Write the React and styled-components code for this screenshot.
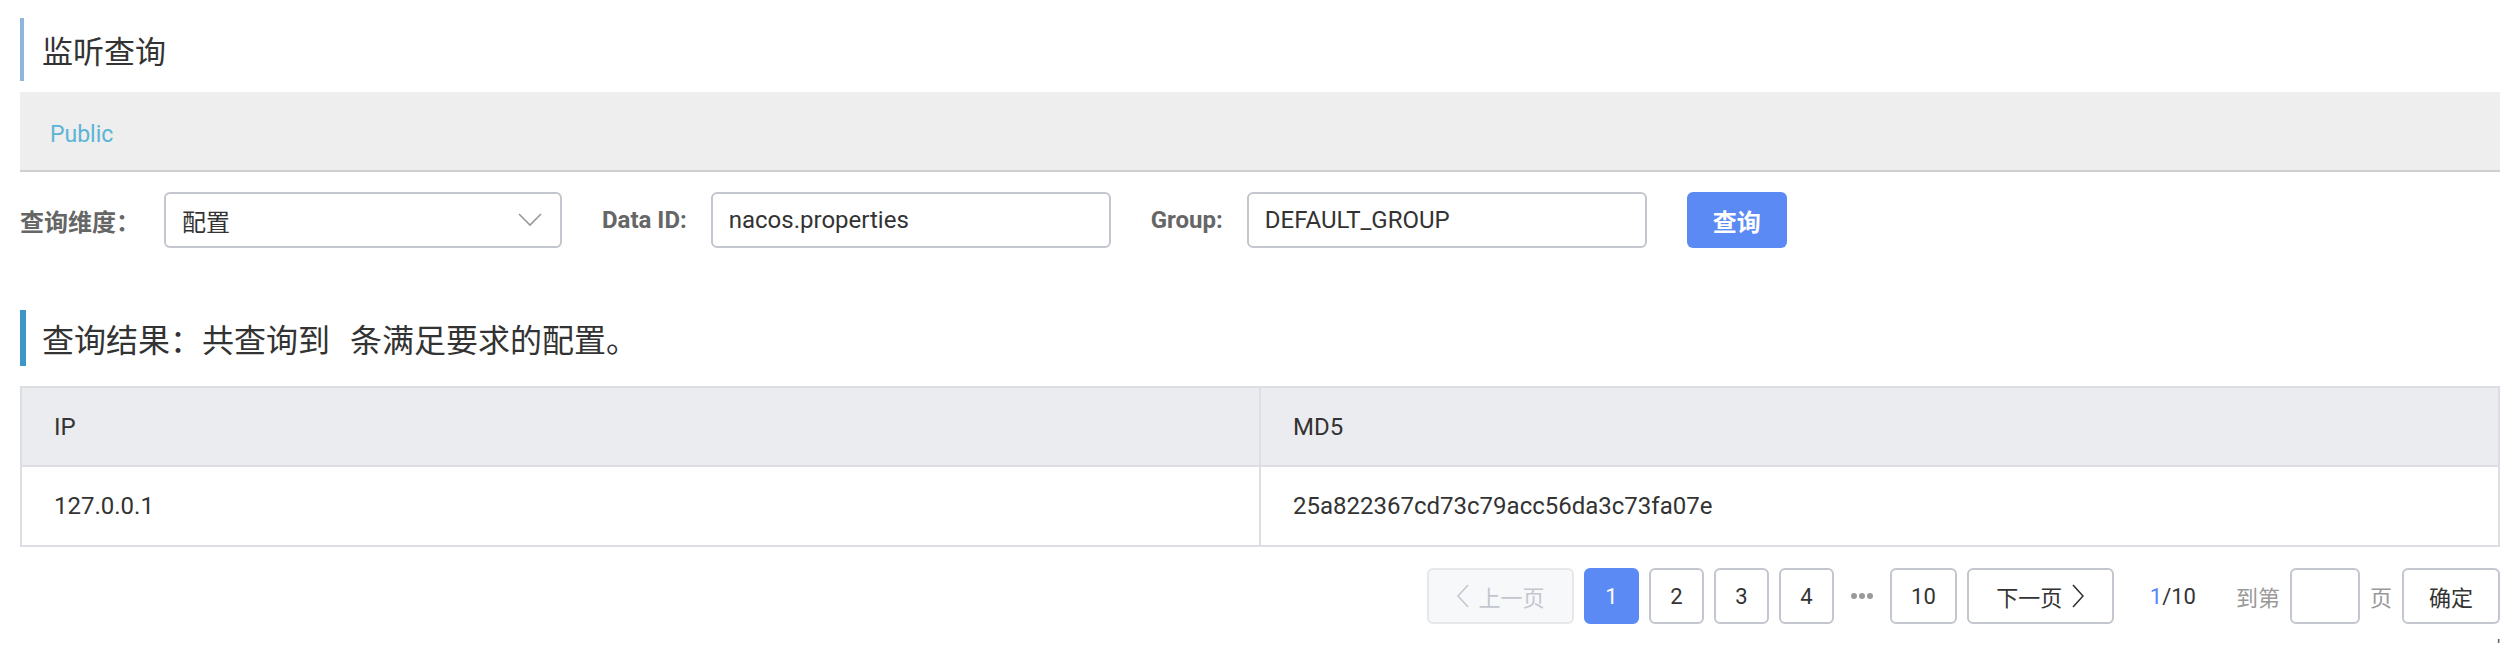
import styled, { createGlobalStyle } from "styled-components";

const GlobalStyle = createGlobalStyle`
  body {
    margin: 0;
    background: #fff;
    font-family: Roboto, "Noto Sans CJK SC", sans-serif;
    color: #333;
  }
  * {
    box-sizing: border-box;
  }
`;

const rows = [{ ip: "127.0.0.1", md5: "25a822367cd73c79acc56da3c73fa07e" }];

const ChevronDown = () => (
  <svg width="24" height="14" viewBox="0 0 24 14">
    <polyline points="1,1 12,12 23,1" fill="none" stroke="#999" strokeWidth="1.6" />
  </svg>
);

const ChevronSide = ({ left }) => (
  <svg width="12" height="24" viewBox="0 0 12 24">
    <polyline
      points={left ? "11,1 1,12 11,23" : "1,1 11,12 1,23"}
      fill="none"
      stroke="currentColor"
      strokeWidth="1.6"
    />
  </svg>
);

const Dots = () => (
  <svg width="24" height="8" viewBox="0 0 24 8">
    <circle cx="4" cy="4" r="3" fill="#999" />
    <circle cx="12" cy="4" r="3" fill="#999" />
    <circle cx="20" cy="4" r="3" fill="#999" />
  </svg>
);

const App = () => {
  const pages = [1, 2, 3, 4];

  return (
    <>
      <GlobalStyle />
      <Page>
        <SectionTitle $color="#8fb5dd" $border={4} $height={63} $size={31}>
          监听查询
        </SectionTitle>
        <NamespaceBar>
          <NamespaceLink>Public</NamespaceLink>
        </NamespaceBar>

        <SearchForm>
          <FormItem>
            <Label>查询维度：</Label>
            <SelectBox>
              <span>配置</span>
              <ChevronDown />
            </SelectBox>
          </FormItem>
          <FormItem>
            <Label>Data ID:</Label>
            <TextInput defaultValue="nacos.properties" />
          </FormItem>
          <FormItem>
            <Label>Group:</Label>
            <TextInput defaultValue="DEFAULT_GROUP" />
          </FormItem>
          <PrimaryButton>查询</PrimaryButton>
        </SearchForm>

        <SectionTitle $color="#3c96c6" $border={6} $height={56} $top={62} $size={32}>
          查询结果：共查询到<Count />条满足要求的配置。
        </SectionTitle>

        <Table>
          <thead>
            <tr>
              <Th>IP</Th>
              <Th>MD5</Th>
            </tr>
          </thead>
          <tbody>
            {rows.map((row) => (
              <tr key={row.ip}>
                <Td>{row.ip}</Td>
                <Td>{row.md5}</Td>
              </tr>
            ))}
          </tbody>
        </Table>

        <Pagination>
          <PageButton disabled $wide>
            <ChevronSide left />
            上一页
          </PageButton>
          {pages.map((p) => (
            <PageButton key={p} $active={p === 1}>
              {p}
            </PageButton>
          ))}
          <Ellipsis>
            <Dots />
          </Ellipsis>
          <PageButton>10</PageButton>
          <PageButton $wide>
            下一页
            <ChevronSide />
          </PageButton>
          <PageInfo>
            <Current>1</Current>/10
          </PageInfo>
          <JumpText $gap={30}>到第</JumpText>
          <JumpInput />
          <JumpText>页</JumpText>
          <PageButton $confirm>确定</PageButton>
        </Pagination>
        <Tick>'</Tick>
      </Page>
    </>
  );
};

export default App;

const Page = styled.div`
  padding: 18px 16px 0 20px;
`;

const SectionTitle = styled.h2`
  display: flex;
  align-items: center;
  height: ${(p) => p.$height}px;
  margin: ${(p) => p.$top || 0}px 0 0;
  padding-left: ${(p) => 22 - p.$border}px;
  border-left: ${(p) => p.$border}px solid ${(p) => p.$color};
  font-size: ${(p) => p.$size}px;
  font-weight: 400;
  color: #333;
`;

const Count = styled.span`
  display: inline-block;
  width: 20px;
`;

const NamespaceBar = styled.div`
  display: flex;
  align-items: center;
  height: 80px;
  margin-top: 11px;
  padding: 6px 0 0 30px;
  background: #eee;
  border-bottom: 2px solid #cfcfcf;
`;

const NamespaceLink = styled.span`
  font-size: 23px;
  color: #5ab5d6;
`;

const SearchForm = styled.div`
  display: flex;
  align-items: center;
  gap: 40px;
  margin-top: 20px;
`;

const FormItem = styled.div`
  display: flex;
  align-items: center;
`;

const Label = styled.label`
  margin-right: 24px;
  font-size: 24px;
  font-weight: 700;
  color: #666;
`;

const SelectBox = styled.div`
  display: flex;
  align-items: center;
  justify-content: space-between;
  width: 398px;
  height: 56px;
  padding: 0 18px 0 16px;
  border: 2px solid #c4c6cf;
  border-radius: 6px;
  font-size: 24px;
  color: #333;
`;

const TextInput = styled.input`
  width: 400px;
  height: 56px;
  padding: 0 16px;
  border: 2px solid #c4c6cf;
  border-radius: 6px;
  font-family: Roboto, "Noto Sans CJK SC", sans-serif;
  font-size: 24px;
  color: #333;
  outline: none;
`;

const PrimaryButton = styled.button`
  width: 100px;
  height: 56px;
  border: none;
  border-radius: 6px;
  background: #5b8af5;
  color: #fff;
  font-family: Roboto, "Noto Sans CJK SC", sans-serif;
  font-size: 24px;
  font-weight: 700;
`;

const Table = styled.table`
  width: 100%;
  margin-top: 20px;
  border-collapse: collapse;
  table-layout: fixed;
  border: 2px solid #dcdee3;
`;

const Th = styled.th`
  height: 79px;
  padding: 0 32px;
  background: #ebecf0;
  border: 2px solid #dcdee3;
  text-align: left;
  font-size: 24px;
  font-weight: 400;
  color: #333;
`;

const Td = styled.td`
  height: 80px;
  padding: 0 32px;
  border: 2px solid #dcdee3;
  font-size: 24px;
  color: #333;
`;

const Pagination = styled.div`
  display: flex;
  align-items: center;
  justify-content: flex-end;
  gap: 10px;
  margin-top: 21px;
  font-size: 22px;
`;

const PageButton = styled.button`
  display: flex;
  align-items: center;
  justify-content: center;
  gap: 10px;
  min-width: ${(p) => (p.$wide ? 147 : p.$confirm ? 98 : 55)}px;
  height: 56px;
  padding: 0 ${(p) => (p.$wide || p.$confirm ? 16 : 19)}px;
  border: 2px solid ${(p) => (p.disabled ? "#e6e7eb" : p.$active ? "#5b8af5" : "#c4c6cf")};
  border-radius: 6px;
  background: ${(p) => (p.disabled ? "#f7f8fa" : p.$active ? "#5b8af5" : "#fff")};
  color: ${(p) => (p.disabled ? "#c4c6cf" : p.$active ? "#fff" : "#333")};
  font-family: Roboto, "Noto Sans CJK SC", sans-serif;
  font-size: 22px;
`;

const Ellipsis = styled.span`
  display: flex;
  align-items: center;
  margin: 0 6px;
`;

const PageInfo = styled.span`
  margin-left: 26px;
  color: #333;
`;

const Current = styled.span`
  color: #5584ff;
`;

const JumpText = styled.span`
  margin-left: ${(p) => p.$gap || 0}px;
  color: #999;
`;

const JumpInput = styled.input`
  width: 70px;
  height: 56px;
  border: 2px solid #c4c6cf;
  border-radius: 6px;
  outline: none;
`;

const Tick = styled.div`
  margin-top: 14px;
  text-align: right;
  font-size: 16px;
  line-height: 16px;
  color: #333;
`;
